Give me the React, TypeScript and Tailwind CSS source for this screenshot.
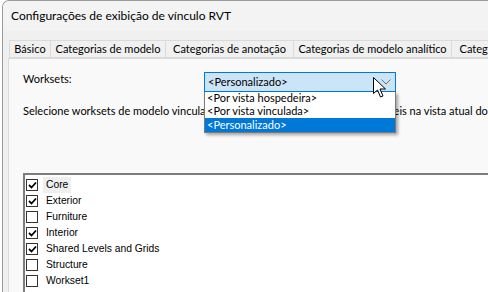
import React from 'react';

const TABS = [
  { label: 'Básico', w: 'w-[41px]' },
  { label: 'Categorias de modelo', w: 'w-[115px]' },
  { label: 'Categorias de anotação', w: 'w-[128px]' },
  { label: 'Categorias de modelo analítico', w: 'w-[158px]' },
  { label: 'Categorias importadas', w: 'w-[124px]' },
];

const WORKSETS = [
  { name: 'Core', checked: true },
  { name: 'Exterior', checked: true },
  { name: 'Furniture', checked: false },
  { name: 'Interior', checked: true },
  { name: 'Shared Levels and Grids', checked: true },
  { name: 'Structure', checked: false },
  { name: 'Workset1', checked: false },
];

const OPTIONS = ['<Por vista hospedeira>', '<Por vista vinculada>', '<Personalizado>'];

function CheckBox({ checked }: { checked: boolean }) {
  return (
    <span className="w-[12px] h-[12px] border border-[#333] bg-white flex items-center justify-center shrink-0">
      {checked && (
        <svg width="9" height="8" viewBox="0 0 9 8">
          <path d="M1 4 L3.5 6.5 L8 1.5" stroke="#000" strokeWidth="1.8" fill="none" />
        </svg>
      )}
    </span>
  );
}

function Cursor() {
  return (
    <svg width="14" height="22" viewBox="0 0 14 22" className="absolute left-[169px] top-[5px] z-20">
      <path
        d="M0.5 0.5 L0.5 16.5 L4.5 13 L7.5 20 L10 19 L7 12 L12.5 12 Z"
        fill="#fff"
        stroke="#000"
        strokeWidth="1"
        strokeLinejoin="round"
      />
    </svg>
  );
}

export default function App() {
  return (
    <div className="w-[488px] h-[292px] overflow-hidden bg-white" style={{ fontFamily: 'Lato, "Liberation Sans", sans-serif' }}>
      <div className="ml-[2px] h-[292px] border-l border-t border-[#9a9a9a] rounded-tl-[7px] bg-[#f0f0f0] flex flex-col overflow-hidden">
        {/* Title bar */}
        <div className="h-[30px] bg-[#f3f3f3] flex items-center pl-[8px] text-[12px] text-black whitespace-nowrap shrink-0">
          Configurações de exibição de vínculo RVT
        </div>

        {/* Tabs */}
        <div className="pt-[9px] pl-[6px] flex whitespace-nowrap shrink-0">
          {TABS.map((t) => (
            <div
              key={t.label}
              className={`${t.w} shrink-0 h-[18px] border border-r-0 border-[#dadada] bg-[#f0f0f0] flex items-center justify-center text-[11px] text-black`}
            >
              {t.label}
            </div>
          ))}
        </div>

        {/* Tab panel */}
        <div className="ml-[5px] flex-1 border-l border-t border-[#dadada] bg-[#f9f9f9] flex flex-col pl-[14px] pt-[13px] text-[11px] text-black">
          <div className="flex items-center h-[20px]">
            <span className="w-[181px] -mt-[5px]">Worksets:</span>
            <div className="relative">
              <div className="w-[192px] h-[20px] border border-[#0078d7] bg-[#cce4f7] flex items-center pl-[3px] justify-between">
                <span>&lt;Personalizado&gt;</span>
                <svg width="10" height="6" viewBox="0 0 10 6" className="mr-[4px]">
                  <path d="M0.5 0.5 L5 5 L9.5 0.5" stroke="#6b6b6b" strokeWidth="1" fill="none" />
                </svg>
              </div>
              <Cursor />
              {/* Open dropdown list */}
              <div className="absolute left-0 top-[20px] w-[192px] border border-[#7a7a7a] border-t-0 bg-white z-10 shadow-[2px_2px_3px_rgba(0,0,0,0.35)]">
                {OPTIONS.map((o, i) => (
                  <div
                    key={o}
                    className={
                      i === 2
                        ? 'h-[14px] pl-[2px] flex items-center bg-[#0078d7] text-white'
                        : 'h-[13px] pl-[2px] flex items-center text-black'
                    }
                  >
                    {o}
                  </div>
                ))}
              </div>
            </div>
          </div>

          <div className="mt-[11px] whitespace-nowrap">
            Selecione worksets de modelo vinculado que deverão ser exibidos como visíveis na vista atual do hospedeiro
          </div>

          {/* Workset list */}
          <div className="mt-[53px] flex-1 border-t-2 border-l-2 border-[#7d7d7d] bg-white pt-[2px] pl-[1px]" style={{ fontFamily: '"Liberation Sans", Arial, sans-serif' }}>
            {WORKSETS.map((w) => (
              <div key={w.name} className="h-[16px] flex items-center text-[10.3px]">
                <CheckBox checked={w.checked} />
                <span className={w.name === 'Core' ? 'ml-[5px] px-[3px] h-[16px] flex items-center bg-[#efefef]' : 'ml-[5px] px-[3px]'}>
                  {w.name}
                </span>
              </div>
            ))}
          </div>
        </div>
      </div>
    </div>
  );
}
